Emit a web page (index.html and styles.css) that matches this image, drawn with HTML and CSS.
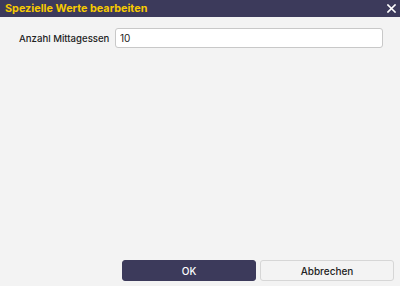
FILE: index.html
```html
<!DOCTYPE html>
<html lang="de">
<head>
<meta charset="utf-8">
<link rel="stylesheet" href="styles.css">
</head>
<body>
<div class="dialog">
  <div class="titlebar">
    <span class="title">Spezielle Werte bearbeiten</span>
    <svg class="close" width="9" height="9" viewBox="0 0 9 9"><path d="M1 1L8 8M8 1L1 8" stroke="#fff" stroke-width="1.6" stroke-linecap="square"/></svg>
  </div>
  <div class="content">
    <div class="row">
      <label class="label">Anzahl Mittagessen</label>
      <input class="input" type="text" value="10">
    </div>
  </div>
  <div class="footer">
    <button class="btn btn-primary">OK</button>
    <button class="btn btn-secondary">Abbrechen</button>
  </div>
</div>
</body>
</html>
```
FILE: styles.css
```css
html, body {
  margin: 0;
  padding: 0;
  width: 400px;
  height: 286px;
  overflow: hidden;
  background: #f3f3f3;
  font-family: Inter, "Open Sans", sans-serif;
}
.dialog {
  display: flex;
  flex-direction: column;
  height: 286px;
}
.titlebar {
  height: 17px;
  background: #3c3a5b;
  display: flex;
  align-items: center;
  justify-content: space-between;
  padding: 0 4px 0 5px;
}
.title {
  color: #f7c900;
  font-weight: 700;
  font-size: 10.8px;
}
.close {
  display: block;
}
.content {
  flex: 1;
  padding: 11px 17px 0 19px;
}
.row {
  display: flex;
  align-items: center;
}
.label {
  width: 96px;
  flex-shrink: 0;
  white-space: nowrap;
  font-size: 9.6px;
  font-weight: 500;
  color: #222;
}
.input {
  flex: 1;
  min-width: 0;
  box-sizing: border-box;
  height: 20px;
  margin: 0;
  border: 1px solid #c8c8c8;
  border-radius: 3px;
  background: #fff;
  padding: 0 4px;
  font-family: inherit;
  font-size: 10px;
  color: #222;
  outline: none;
}
.footer {
  display: flex;
  justify-content: flex-end;
  gap: 4px;
  padding: 0 6px 5px 0;
}
.btn {
  width: 134px;
  height: 21px;
  box-sizing: border-box;
  border-radius: 3px;
  font-family: inherit;
  font-size: 10px;
  font-weight: 500;
  margin: 0;
  padding: 0;
}
.btn-primary {
  background: #3c3a5b;
  color: #fff;
  border: 1px solid #3c3a5b;
}
.btn-secondary {
  background: #f3f3f3;
  color: #222;
  border: 1px solid #d6d6d6;
}
```
